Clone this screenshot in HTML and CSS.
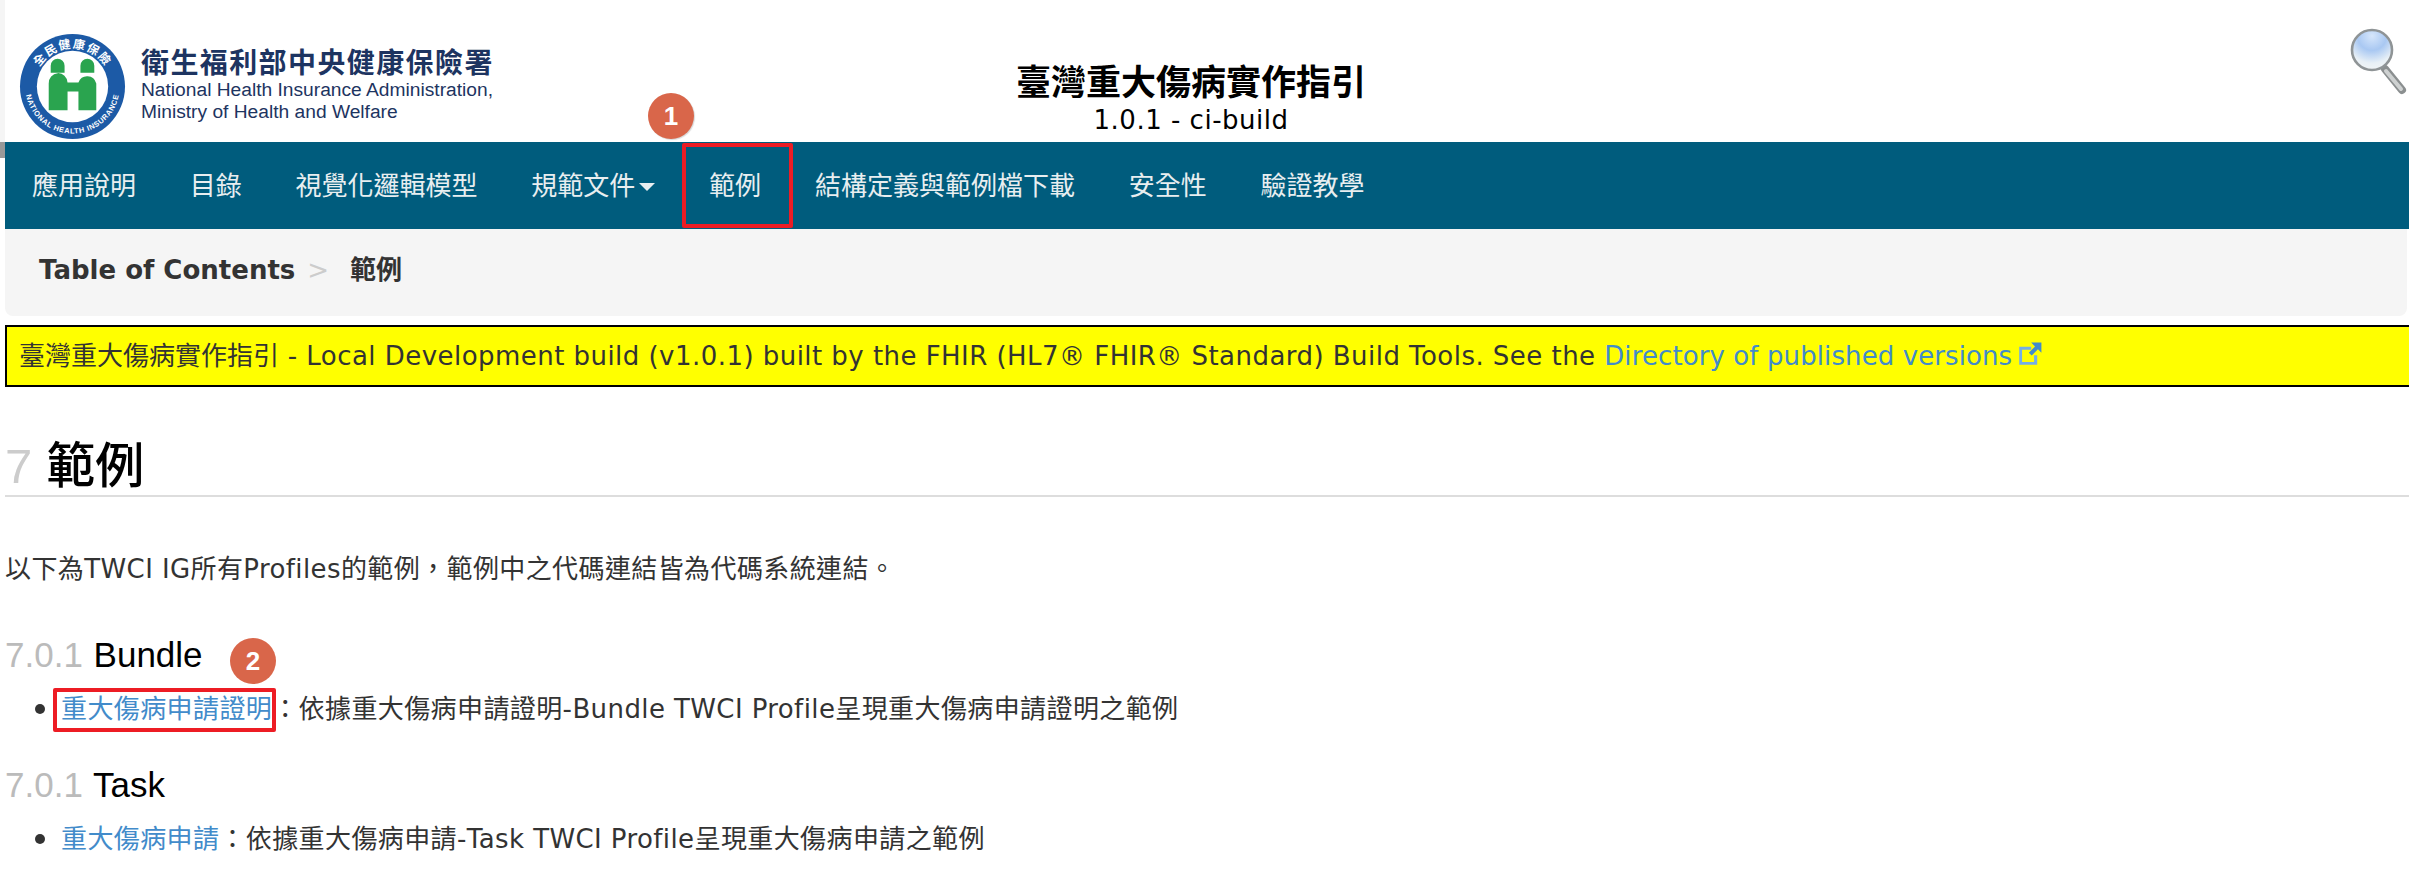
FILE: index.html
```html
<!DOCTYPE html>
<html lang="zh-Hant">
<head>
<meta charset="utf-8">
<title>範例 - 臺灣重大傷病實作指引</title>
<link rel="stylesheet" href="styles.css">
</head>
<body>
<div class="page">
  <aside class="gutter"><div class="gutter-top"></div><div class="gutter-mid"></div></aside>
  <div class="content">
    <header class="header">
      <div class="brand">
        <svg class="seal" viewBox="-54 -54 108 108" aria-hidden="true">
          <defs>
            <path id="arcTop" d="M-38.5 0 A38.5 38.5 0 0 1 38.5 0"/>
            <path id="arcBottom" d="M-47.5 0 A47.5 47.5 0 0 0 47.5 0"/>
          </defs>
          <circle r="53" fill="#1c5aa6"/>
          <circle r="36" fill="#fff"/>
          <text class="seal-cjk"><textPath href="#arcTop" startOffset="50%" text-anchor="middle">全民健康保險</textPath></text>
          <text class="seal-en"><textPath href="#arcBottom" startOffset="50%" text-anchor="middle">NATIONAL HEALTH INSURANCE</textPath></text>
          <path fill="#2aa44f" d="M-22 -14v-7a7 7 0 0 1 14 0v7zM8 -14v-7a7 7 0 0 1 14 0v7z"/>
          <path fill="#2aa44f" d="M-24 24V-3a9.5 10 0 0 1 19 -1h11a9.5 10 0 0 1 18 1V24H6V5H-5V24z"/>
        </svg>
        <div class="agency">
          <div class="agency-zh">衛生福利部中央健康保險署</div>
          <div class="agency-en">National Health Insurance Administration,</div>
          <div class="agency-en">Ministry of Health and Welfare</div>
        </div>
      </div>
      <div class="title-block">
        <div class="title">臺灣重大傷病實作指引</div>
        <div class="version">1.0.1 - ci-build</div>
      </div>
      <svg class="search" viewBox="0 0 60 76" aria-hidden="true">
        <defs>
          <radialGradient id="lens" cx="50%" cy="15%" r="90%">
            <stop offset="0" stop-color="#d6e6fb"/>
            <stop offset="0.4" stop-color="#a9c8f2"/>
            <stop offset="0.75" stop-color="#e8f0f6"/>
            <stop offset="1" stop-color="#f4f6f6"/>
          </radialGradient>
        </defs>
        <path d="M36 42L53 63" stroke="#8b8f90" stroke-width="8" stroke-linecap="round"/>
        <path d="M37 44L52 62" stroke="#ced1d1" stroke-width="4" stroke-linecap="round"/>
        <circle cx="23" cy="23" r="20" fill="url(#lens)" stroke="#8f9496" stroke-width="2.6"/>
      </svg>
    </header>
    <nav class="navbar">
      <a class="nav-item">應用說明</a>
      <a class="nav-item">目錄</a>
      <a class="nav-item">視覺化邏輯模型</a>
      <a class="nav-item">規範文件<span class="caret"></span></a>
      <a class="nav-item">範例</a>
      <a class="nav-item">結構定義與範例檔下載</a>
      <a class="nav-item">安全性</a>
      <a class="nav-item">驗證教學</a>
    </nav>
    <div class="breadcrumb"><b>Table of Contents</b><span class="sep">&gt;</span><b class="crumb-current">範例</b></div>
    <div class="notice"><span class="notice-name">臺灣重大傷病實作指引</span> - Local Development build (v1.0.1) built by the FHIR (HL7® FHIR® Standard) Build Tools. See the <a class="link notice-link">Directory of published versions<svg class="ext" viewBox="0 0 20 20" aria-hidden="true"><path class="ext-box" d="M1 4h10v2.4H3.4v10.2h10V11H16v8H1z"/><path d="M11 .5h8.500v8.500l-2.900-2.900-5.200 5.200-2.400-2.400 5.200-5.200z"/></svg></a></div>
    <main class="main">
      <h1 class="h1"><span class="num">7</span> 範例</h1>
      <p class="intro">以下為TWCI IG所有Profiles的範例，範例中之代碼連結皆為代碼系統連結。</p>
      <h3 class="h3 first"><span class="num3">7.0.1</span> Bundle</h3>
      <ul class="list"><li><a class="link">重大傷病申請證明</a>：依據重大傷病申請證明-Bundle TWCI Profile呈現重大傷病申請證明之範例</li></ul>
      <h3 class="h3"><span class="num3">7.0.1</span> Task</h3>
      <ul class="list"><li><a class="link">重大傷病申請</a>：依據重大傷病申請-Task TWCI Profile呈現重大傷病申請之範例</li></ul>
    </main>
  </div>
</div>
<div class="badge badge-one">1</div>
<div class="highlight highlight-nav"></div>
<div class="badge badge-two">2</div>
<div class="highlight highlight-link"></div>
</body>
</html>
```
FILE: styles.css
```css
html, body { margin: 0; padding: 0; background: #fff; }
body {
  width: 2409px; height: 881px; overflow: hidden; position: relative;
  font-family: "DejaVu Sans", "Noto Sans CJK TC", sans-serif;
  font-size: 26px; color: #333;
}
.page { display: flex; align-items: flex-start; width: 2409px; }
.gutter { width: 5px; flex: none; }
.gutter-top { height: 142px; background: #f5f5f5; }
.gutter-mid { height: 16px; background: #999; }
.content { flex: 1; min-width: 0; }

.header { height: 142px; display: flex; align-items: flex-start; }
.brand { display: flex; align-items: flex-start; gap: 15px; padding: 33px 0 0 14px; width: 950px; flex: none; box-sizing: border-box; }
.seal { width: 107px; height: 107px; flex: none; }
.seal-cjk { font: 700 12px "Noto Sans CJK TC", sans-serif; fill: #fff; letter-spacing: 1.4px; }
.seal-en { font: 700 7.5px "Liberation Sans", sans-serif; fill: #fff; letter-spacing: .6px; }
.agency { padding-top: 12px; color: #1d3461; font-family: "Liberation Sans", sans-serif; }
.agency-zh { font: 700 28px/32px "Noto Sans CJK TC", sans-serif; letter-spacing: 1.4px; margin-bottom: 2px; white-space: nowrap; }
.agency-en { font-size: 19.2px; line-height: 22px; white-space: nowrap; }
.title-block { width: 472px; flex: none; text-align: center; padding-top: 55px; color: #000; }
.title { font: 700 35px/50px "Noto Sans CJK TC", sans-serif; }
.version { font-size: 26px; line-height: 30px; letter-spacing: .5px; }
.search { width: 60px; height: 76px; margin: 27px 0 0 auto; flex: none; }

.navbar { height: 87px; box-sizing: border-box; padding-bottom: 4px; background: #005c7d; display: flex; align-items: center; }
.nav-item { color: #e8eef0; font: 26px/83px "Noto Sans CJK TC", sans-serif; padding: 0 26.9px; white-space: nowrap; }
.caret { display: inline-block; width: 0; height: 0; margin-left: 4px; vertical-align: 4px; border-left: 8px solid transparent; border-right: 8px solid transparent; border-top: 8px solid #e8eef0; }

.breadcrumb { height: 87px; box-sizing: border-box; padding: 0 0 5px 34px; margin-right: 2px; background: #f5f5f5; border-radius: 0 0 8px 8px; display: flex; align-items: center; color: #333; }
.breadcrumb b { font-weight: 700; }
.breadcrumb .crumb-current { margin-bottom: 5px; }
.sep { color: #ccc; margin: 0 21px 0 12px; }

.notice { margin: 9px -4px 0 0; height: 62px; box-sizing: border-box; background: #ff0; border: 2px solid #000; padding-left: 12px; line-height: 58px; letter-spacing: .46px; color: #333; white-space: nowrap; }
.notice-name { letter-spacing: 0; }
.notice-link { letter-spacing: .1px; }
.link { color: #428bca; text-decoration: none; }
.ext { width: 24px; height: 24px; fill: #428bca; margin-left: 6px; vertical-align: -1px; }
.ext-box { fill: #74aee6; }

.main { letter-spacing: .4px; }
.h1 { margin: 0; height: 61px; padding-top: 47px; border-bottom: 2px solid #ddd; font: 500 49px/56px "Noto Sans CJK TC", sans-serif; color: #000; letter-spacing: 0; }
.h1 .num { font: 400 49px "Liberation Sans", sans-serif; color: #ccc; margin-right: 3px; }
.intro { margin: 0; padding-top: 52px; line-height: 40px; }
.h3 { margin: 0; font: 400 35px/40px "Liberation Sans", sans-serif; color: #000; padding-top: 36px; letter-spacing: 0; }
.h3.first { padding-top: 46px; }
.num3 { color: #bbb; margin-right: 1px; }
.list { margin: 0; padding: 0 0 0 56px; line-height: 40px; list-style: none; }
.list li { padding-top: 14px; }
.list li::before { content: ""; display: inline-block; width: 10px; height: 10px; border-radius: 50%; background: #333; margin: 0 16px 0 -26px; vertical-align: 4px; }

.badge { position: absolute; width: 46px; height: 46px; border-radius: 50%; background: #d9664a; color: #fff; font: 700 26px/46px "Liberation Sans", sans-serif; text-align: center; }
.badge-one { left: 648px; top: 93px; box-shadow: 1px 1px 1px #d8d8d8; }
.badge-two { left: 230px; top: 638px; }
.highlight { position: absolute; box-sizing: border-box; border: 4px solid #ed1c24; border-radius: 2px; }
.highlight-nav { left: 682px; top: 143px; width: 111px; height: 85px; }
.highlight-link { left: 53px; top: 688px; width: 223px; height: 44px; }
```
